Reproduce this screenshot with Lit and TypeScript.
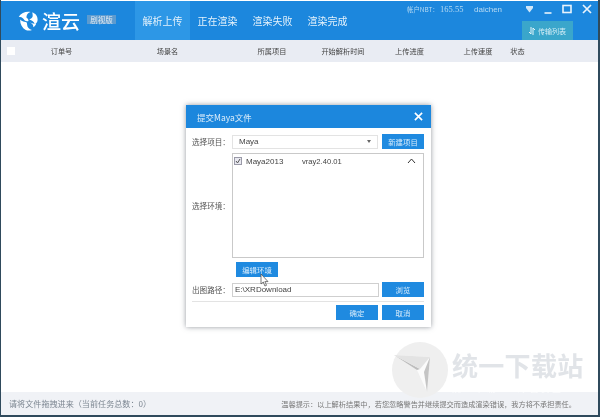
import { LitElement, html, css } from "lit";
import { customElement } from "lit/decorators.js";

@customElement("app-root")
export class AppRoot extends LitElement {
  static styles = css`
    :host { display: block; width: 600px; height: 417px; overflow: hidden; background: #2f4a5c; }
    * { box-sizing: border-box; }
    .win { position: relative; width: 597px; height: 415px; margin-left: 1px; background: #fff; display: flex; flex-direction: column;
      font-family: "Noto Sans CJK SC", "Liberation Sans", sans-serif; color: #444; filter: blur(0.55px); overflow: hidden; }
    .top { height: 39px; background: #1c87dd; display: flex; flex: none; position: relative; margin-top: 1px; }
    .logo { width: 134px; flex: none; display: flex; align-items: center; padding-left: 17px; color: #fff; }
    .logo svg { width: 21px; height: 22px; flex: none; }
    .brand { font-size: 19px; font-weight: 500; margin-left: 3px; width: 38px; flex: none; line-height: 1; white-space: nowrap; }
    .badge { font-size: 7.5px; background: #5d9bcf; color: #dfeaf4; height: 9px; line-height: 9px; margin-left: 7px; margin-top: -3px; width: 29px; flex: none; text-align: center; white-space: nowrap; }
    .tab { width: 55px; flex: none; text-align: center; font-size: 10px; color: #e3f1fb; line-height: 39px; white-space: nowrap; }
    .tab.on { background: #2d97e6; }
    .right { flex: 1; display: flex; flex-direction: column; align-items: flex-end; }
    .status { display: flex; align-items: center; height: 14px; font-size: 6.4px; color: #b6daf3; margin-top: 1px; width: 100%; padding-left: 52px; white-space: nowrap; }
    .status .acct { width: 33px; flex: none; }
    .status .amt { font-family: "Liberation Serif", serif; font-size: 8.5px; width: 34px; flex: none; }
    .status .user { font-family: "Liberation Sans", sans-serif; font-size: 8px; width: 46px; flex: none; }
    .ctl { display: flex; align-items: center; flex: none; }
    .ctl svg { width: 19px; height: 12px; display: block; }
    .trans { width: 51px; height: 19px; margin: 5px 25px 0 0; background: #3aa6cb; color: #d5eef6; font-size: 7px; display: flex; align-items: center; justify-content: center; gap: 3px; }
    .thead { height: 22px; flex: none; background: #e9ecf3; display: grid;
      grid-template-columns: 6px 9px 91px 121px 88px 54px 79px 58px 21px 1fr; align-items: center; font-size: 7.2px; color: #444; text-align: center; white-space: nowrap; }
    .check { width: 8px; height: 8px; background: #fff; }
    .body { flex: 1; background: #fff; }
    .foot { height: 23px; flex: none; background: #f0f2f6; display: flex; align-items: center; justify-content: space-between; padding: 0 22px 0 8px; font-size: 8.1px; color: #7d8792; white-space: nowrap; }
    .foot .r { font-size: 7.2px; color: #777; }

    .modal { position: absolute; left: 185px; top: 105px; width: 245px; height: 222px; background: #fff; box-shadow: 0 0 5px rgba(60,70,80,.55); font-size: 8px; color: #444; display: flex; flex-direction: column; }
    .mhead { height: 23px; flex: none; background: #1c87dd; color: #dcedfa; display: flex; align-items: center; justify-content: space-between; padding: 0 8px 0 11px; font-size: 8.5px; }
    .mhead svg { width: 9px; height: 9px; }
    .mbody { padding: 6px 7px 0 6px; display: flex; flex-direction: column; flex: 1; }
    .row { display: grid; grid-template-columns: 40px 146px 1fr; align-items: center; height: 15px; }
    .row .btn { margin-left: 4px; width: 42px; }
    .lbl { white-space: nowrap; color: #555; font-size: 7.6px; }
    .sel { border: 1px solid #e3e3e3; height: 14px; display: flex; align-items: center; justify-content: space-between; padding: 0 6px; font-family: "Liberation Sans", sans-serif; font-size: 8px; }
    .caret { width: 0; height: 0; border: 2.5px solid transparent; border-top: 3px solid #666; border-bottom: 0; }
    .btn { background: #1f8ae0; color: #d6ebfb; height: 15px; display: flex; align-items: center; justify-content: center; font-size: 7.4px; }
    .envrow { display: grid; grid-template-columns: 40px 192px; align-items: center; margin-top: 4px; height: 105px; }
    .list { height: 105px; border: 1px solid #c9c9c9; padding: 2px 7px 0 1px; display: flex; align-items: flex-start; font-family: "Liberation Sans", sans-serif; font-size: 8px; line-height: 11px; color: #444; }
    .cb { width: 8px; height: 8px; border: 1px solid #9a9aa8; background: #e8e8f0; margin: 1px 4px 0 0; flex: none; position: relative; }
    .cb svg { position: absolute; left: 0; top: 0; width: 6px; height: 6px; }
    .m { width: 56px; flex: none; }
    .v { flex: 1; font-size: 7.6px; }
    .up { width: 9px; height: 6px; margin-top: 2px; flex: none; }
    .editw { padding-left: 44px; margin-top: 4px; position: relative; }
    .editw .btn { width: 42px; }
    .cursor { position: absolute; left: 68px; top: 12px; width: 9px; height: 13px; }
    .pathrow { margin-top: 5px; }
    .inp { border: 1px solid #cfcfcf; height: 14px; margin-right: -1px; padding: 0 2px; display: flex; align-items: center; font-family: "Liberation Sans", sans-serif; font-size: 8px; color: #444; }
    .sep { height: 1px; background: #e3e3e3; margin-top: 4px; }
    .acts { display: flex; justify-content: flex-end; gap: 4px; margin-top: 3px; }
    .acts .btn { width: 42px; }

    .wm { position: absolute; left: 391px; top: 342px; display: flex; pointer-events: none; }
    .circle { width: 56px; height: 56px; flex: none; }
    .wmt { margin-left: 4px; width: 140px; }
    .wm1 { font-size: 26px; font-weight: 700; line-height: 30px; color: rgba(222,225,229,.9); letter-spacing: 0.3px; margin-top: 8px; white-space: nowrap; }
    .wm2 { font-size: 9px; line-height: 12px; color: rgba(255,255,255,.7); white-space: nowrap; letter-spacing: 2.4px; margin-top: 3px; }
  `;

  render() {
    return html`
      <div class="win">
        <div class="top">
          <div class="logo">
            <svg viewBox="0 0 30 30"><g fill="#fff">
              <path d="M1 9c4-6 10-8 17-7-4 1-6 4-6 8 2 1 3 3 3 5-4 1-6-1-7-3-2-2-4-3-7-3z"/>
              <path d="M20 3c5 1 8 5 8 10 0 3-1 5-4 7-1-4-4-6-8-7 3-1 5-3 5-5 0-2 0-4-1-5z"/>
              <path d="M3 13c0 7 3 12 8 15 3 1 6 1 9 0-4-1-7-4-7-8 0-3-1-4-4-4-2 0-4-1-6-3z"/>
              <path d="M17 17c3 1 5 3 5 7 2-1 3-3 4-5-3 0-6-1-9-2z"/>
            </g></svg>
            <span class="brand">渲云</span>
            <span class="badge">剧视版</span>
          </div>
          <div class="tab on">解析上传</div>
          <div class="tab">正在渲染</div>
          <div class="tab">渲染失败</div>
          <div class="tab">渲染完成</div>
          <div class="right">
            <div class="status">
              <span class="acct">帐户NBT：</span><span class="amt">165.55</span><span class="user">daichen</span>
              <span class="ctl">
                <svg viewBox="0 0 19 12"><path d="M6 3h7v2L9.5 9.5 6 5z" fill="#cfe6f8"/></svg>
                <svg viewBox="0 0 19 12"><path d="M5.5 10h7" stroke="#e8f3fc" stroke-width="1.6"/></svg>
                <svg viewBox="0 0 19 12"><rect x="5" y="2.5" width="8" height="7" fill="none" stroke="#e8f3fc" stroke-width="1.6"/></svg>
                <svg viewBox="0 0 19 12"><path d="M6 2l8 8M14 2l-8 8" stroke="#e8f3fc" stroke-width="1.7"/></svg>
              </span>
            </div>
            <div class="trans">
              <svg width="6" height="8" viewBox="0 0 6 8"><path d="M2 0v7M2 7L0 5M4 8V1M4 1l2 2" stroke="#e5f5fa" fill="none"/></svg>
              <span>传输列表</span>
            </div>
          </div>
        </div>
        <div class="thead">
          <span></span><span class="check"></span>
          <span>订单号</span><span>场景名</span><span>所属项目</span><span>开始解析时间</span><span>上传进度</span><span>上传速度</span><span>状态</span><span></span>
        </div>
        <div class="body"></div>
        <div class="foot">
          <span>请将文件拖拽进来（当前任务总数：0）</span>
          <span class="r">温馨提示：以上解析结果中，若您忽略警告并继续提交而造成渲染错误，我方将不承担责任。</span>
        </div>

        <div class="wm">
          <svg class="circle" viewBox="0 0 56 56">
            <circle cx="28" cy="28" r="28" fill="#efefef"/>
            <path d="M2 13l36 2-3 35-10-22z" fill="#fbfbfb"/>
            <path d="M2 13l23 15 3-1z" fill="#bdbdbd"/>
            <path d="M2 13l36 2-10 12z" fill="#e3e3e3"/>
            <path d="M38 15l-3 35-3-20z" fill="#c4c4c4"/>
          </svg>
          <div class="wmt">
            <div class="wm1">统一下载站</div>
            <div class="wm2">统一下载 · 绿色安全</div>
          </div>
        </div>

        <div class="modal">
          <div class="mhead">
            <span>提交Maya文件</span>
            <svg viewBox="0 0 10 10"><path d="M1 1l8 8M9 1l-8 8" stroke="#fff" stroke-width="1.8"/></svg>
          </div>
          <div class="mbody">
            <div class="row">
              <span class="lbl">选择项目：</span>
              <div class="sel"><span>Maya</span><span class="caret"></span></div>
              <div class="btn">新建项目</div>
            </div>
            <div class="envrow">
              <span class="lbl">选择环境：</span>
              <div class="list">
                <span class="cb"><svg viewBox="0 0 6 6"><path d="M1 3l1.5 2L5 1" stroke="#555" fill="none"/></svg></span>
                <span class="m">Maya2013</span>
                <span class="v">vray2.40.01</span>
                <svg class="up" viewBox="0 0 9 6"><path d="M1 5l3.5-4L8 5" stroke="#333" fill="none" stroke-width="1"/></svg>
              </div>
            </div>
            <div class="editw">
              <div class="btn">编辑环境</div>
              <svg class="cursor" viewBox="0 0 9 13"><path d="M1 0v10l2.3-2 1.6 4 1.6-.7-1.6-3.7H8z" fill="#fff" stroke="#555" stroke-width=".8"/></svg>
            </div>
            <div class="row pathrow">
              <span class="lbl">出图路径：</span>
              <div class="inp">E:\\XRDownload</div>
              <div class="btn">浏览</div>
            </div>
            <div class="sep"></div>
            <div class="acts"><div class="btn">确定</div><div class="btn">取消</div></div>
          </div>
        </div>
      </div>
    `;
  }
}
